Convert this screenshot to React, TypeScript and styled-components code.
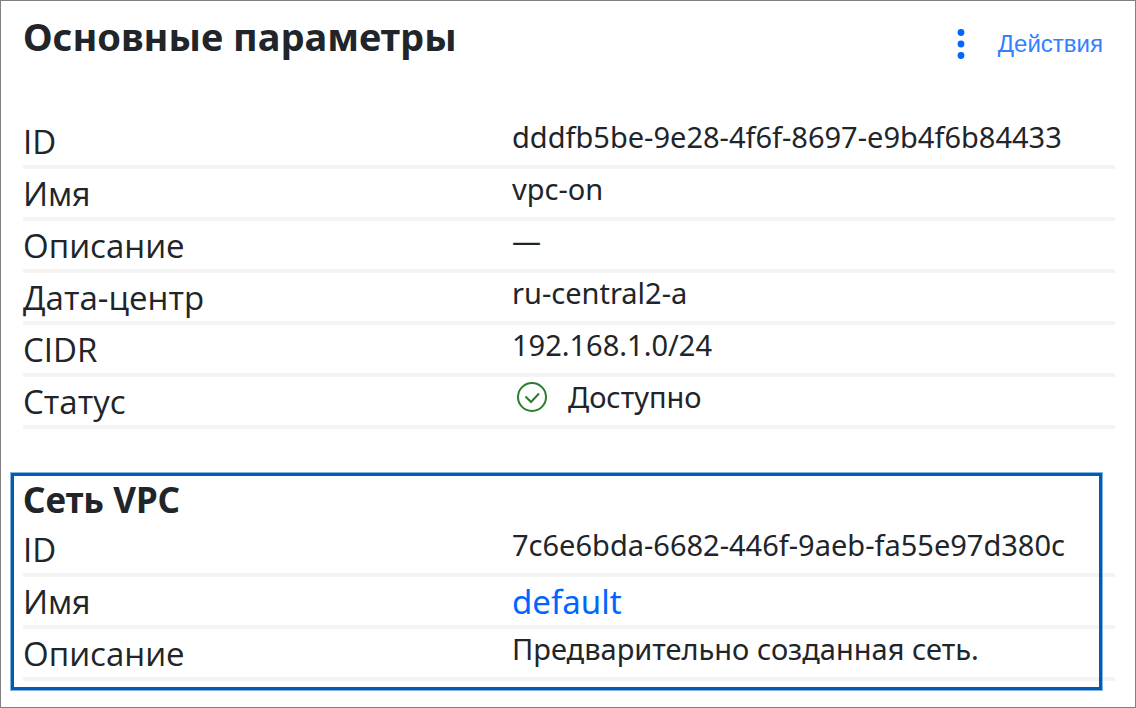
import React from 'react';
import styled, { createGlobalStyle } from 'styled-components';

const GlobalStyle = createGlobalStyle`
  *, *::before, *::after { box-sizing: border-box; }
  body {
    margin: 0;
    background: #ffffff;
    color: #212529;
    font-family: "Noto Sans", "Open Sans", sans-serif;
  }
`;

const Page = styled.main`
  min-height: 100vh;
  padding: 8px 20px 16px 22px;
  border: 1px solid #808080;
`;

const Header = styled.header`
  display: flex;
  justify-content: space-between;
  align-items: flex-start;
  padding-right: 12px;
  margin-bottom: 54px;
`;

const Title = styled.h1`
  margin: 0;
  font-size: 38px;
  line-height: 54px;
  font-weight: 700;
`;

const ActionsButton = styled.button`
  display: flex;
  align-items: center;
  gap: 33px;
  margin: 0;
  padding: 20px 0 0;
  border: 0;
  background: none;
  color: #3380ff;
  font-family: "Liberation Sans", Arial, sans-serif;
  font-size: 24px;
  line-height: 30px;
  cursor: pointer;
`;

const DotsIcon = () => (
  <svg width="8" height="30" viewBox="0 0 8 30" fill="#0066ff" aria-hidden="true">
    <circle cx="4" cy="3.5" r="3.4" />
    <circle cx="4" cy="15" r="3.4" />
    <circle cx="4" cy="26.5" r="3.4" />
  </svg>
);

const Params = styled.dl`
  margin: 0;
`;

const Row = styled.div`
  display: grid;
  grid-template-columns: 122fr 151fr;
  height: 52px;
  border-bottom: 4px solid #f4f4f4;
`;

const Label = styled.dt`
  padding-top: 2px;
  font-family: "Open Sans", "Noto Sans", sans-serif;
  font-size: 33px;
  font-weight: 450;
  line-height: 46px;
`;

const Value = styled.dd`
  display: flex;
  align-items: center;
  margin: 0;
  padding: 0 0 8px 1px;
  font-size: 29px;
  line-height: 40px;
  white-space: nowrap;
`;

const LinkValue = styled(Value)`
  padding: 2px 0 0 1px;
  font-size: 33px;
  line-height: 46px;
`;

const NetworkLink = styled.a`
  color: #0066ff;
  text-decoration: none;
`;

const Status = styled.span`
  display: flex;
  align-items: center;
  gap: 20px;
  padding-left: 4px;
`;

const CheckIcon = () => (
  <svg width="32" height="32" viewBox="0 0 32 32" fill="none" stroke="#2a7d2e" strokeWidth="2" aria-hidden="true">
    <circle cx="16" cy="16" r="14" />
    <path d="M9.5 15.5 L15 21 L23 12.5" />
  </svg>
);

const Network = styled.section`
  position: relative;
  margin-top: 43px;
  padding: 4px 0 10px;

  &::after {
    content: "";
    position: absolute;
    inset: 0 12px 0 -13px;
    border: 4px solid #005bb5;
    outline: 1px solid #86b4dc;
    outline-offset: -1px;
    pointer-events: none;
  }
`;

const Subtitle = styled.h2`
  margin: 0;
  padding-bottom: 1px;
  font-size: 35px;
  line-height: 48px;
  font-weight: 700;
`;

type Param = { label: string; value: React.ReactNode; link?: boolean };

const mainParams: Param[] = [
  { label: 'ID', value: 'dddfb5be-9e28-4f6f-8697-e9b4f6b84433' },
  { label: 'Имя', value: 'vpc-on' },
  { label: 'Описание', value: '—' },
  { label: 'Дата-центр', value: 'ru-central2-a' },
  { label: 'CIDR', value: '192.168.1.0/24' },
  { label: 'Статус', value: <Status><CheckIcon />Доступно</Status> },
];

const networkParams: Param[] = [
  { label: 'ID', value: '7c6e6bda-6682-446f-9aeb-fa55e97d380c' },
  { label: 'Имя', value: 'default', link: true },
  { label: 'Описание', value: 'Предварительно созданная сеть.' },
];

const ParamList = ({ items }: { items: Param[] }) => (
  <Params>
    {items.map(({ label, value, link }) => (
      <Row key={label}>
        <Label>{label}</Label>
        {link ? (
          <LinkValue><NetworkLink href="#network">{value}</NetworkLink></LinkValue>
        ) : (
          <Value>{value}</Value>
        )}
      </Row>
    ))}
  </Params>
);

export default function App() {
  return (
    <>
      <GlobalStyle />
      <Page>
        <Header>
          <Title>Основные параметры</Title>
          <ActionsButton type="button"><DotsIcon />Действия</ActionsButton>
        </Header>
        <ParamList items={mainParams} />
        <Network id="network">
          <Subtitle>Сеть VPC</Subtitle>
          <ParamList items={networkParams} />
        </Network>
      </Page>
    </>
  );
}
